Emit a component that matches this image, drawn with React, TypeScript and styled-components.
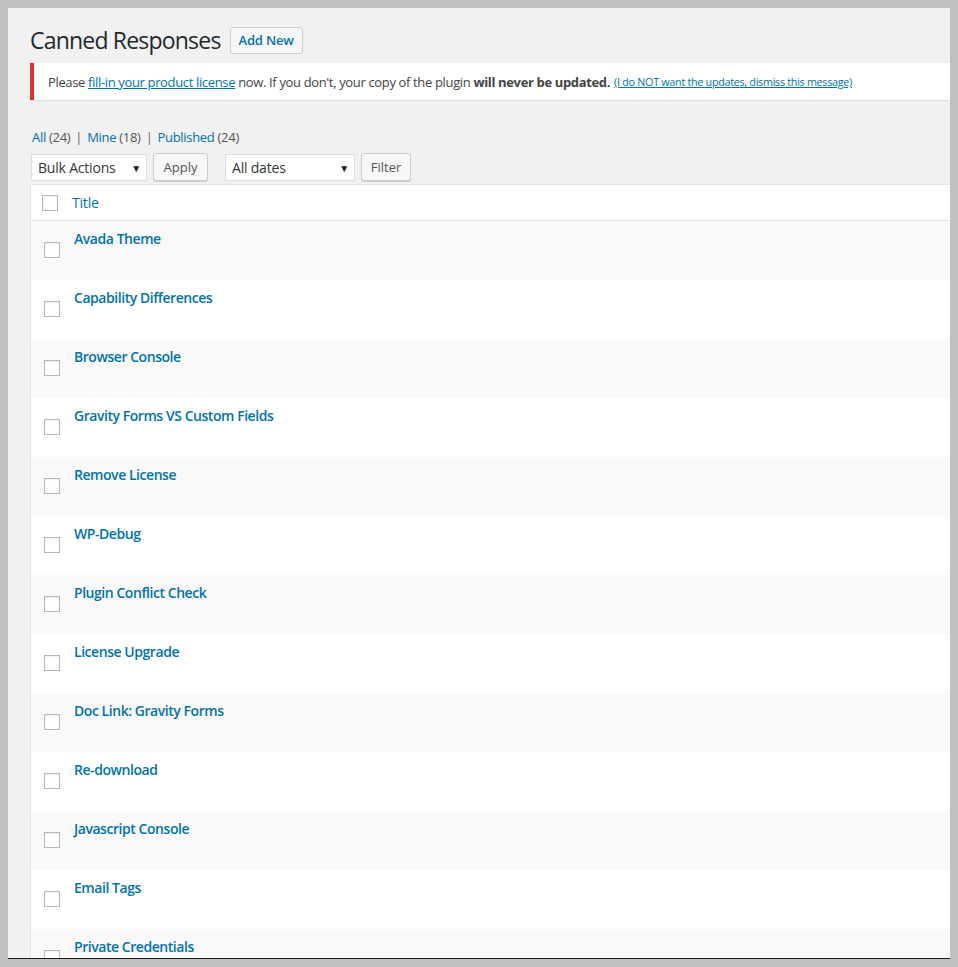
import React from "react";
import styled, { createGlobalStyle } from "styled-components";

const Global = createGlobalStyle`
  html, body { margin: 0; padding: 0; }
  body {
    background: #c0c0c0;
    font-family: "Open Sans", "Noto Sans", sans-serif;
    color: #444;
  }
`;

const Frame = styled.div`
  padding: 8px 8px 0 8px;
  width: 958px;
  height: 967px;
  box-sizing: border-box;
`;

const Page = styled.div`
  width: 942px;
  height: 951px;
  background: #f1f1f1;
  overflow: hidden;
  border-bottom: 1px solid #1a1a22;
  box-sizing: border-box;
  padding: 0 0 0 22px;
`;

const HeadRow = styled.div`
  display: flex;
  align-items: center;
  gap: 9px;
  padding-top: 19px;
  height: 26px;
`;

const Title = styled.h1`
  margin: 0;
  font-size: 23px;
  font-weight: 400;
  color: #23282d;
  line-height: 29px;
  letter-spacing: -0.8px;
`;

const Button = styled.button<{ $blue?: boolean; $w: number }>`
  box-sizing: border-box;
  width: ${(p) => p.$w}px;
  height: ${(p) => (p.$blue ? 27 : 28)}px;
  padding: 0;
  border: 1px solid #ccc;
  border-radius: 3px;
  background: #f7f7f7;
  box-shadow: ${(p) => (p.$blue ? "none" : "0 1px 0 #ccc")};
  color: ${(p) => (p.$blue ? "#0073aa" : "#555")};
  font-family: inherit;
  font-size: 13px;
  font-weight: ${(p) => (p.$blue ? 600 : 400)};
  letter-spacing: ${(p) => (p.$blue ? "-0.2px" : "0")};
  line-height: 1;
  cursor: pointer;
`;

const Notice = styled.div`
  margin-top: 10px;
  height: 37px;
  box-sizing: border-box;
  background: #fff;
  border-left: 4px solid #dc3232;
  box-shadow: 0 1px 1px rgba(0, 0, 0, 0.08);
  display: flex;
  align-items: center;
  padding-left: 14px;
  font-size: 13px;
  color: #444;
  white-space: nowrap;
  letter-spacing: -0.35px;
`;

const Link = styled.a`
  color: #0073aa;
  text-decoration: underline;
`;

const SmallLink = styled.a`
  color: #0073aa;
  text-decoration: underline;
  font-size: 10.8px;
  letter-spacing: -0.3px;
  margin-left: 4px;
`;

const Subsub = styled.div`
  margin-top: 28px;
  padding-left: 2px;
  font-size: 13px;
  line-height: 18px;
  color: #666;
  display: flex;
  gap: 5px;
  letter-spacing: -0.3px;
`;

const SubLink = styled.a`
  color: #0073aa;
  text-decoration: none;
`;

const Count = styled.span`
  color: #555;
`;

const Sep = styled.span`
  color: #666;
`;

const Tablenav = styled.div`
  margin-top: 7px;
  display: flex;
  align-items: flex-start;
  height: 31px;
  padding-left: 1px;
`;

const Select = styled.div<{ $w: number; $gapAfter: number }>`
  box-sizing: border-box;
  width: ${(p) => p.$w}px;
  height: 27px;
  margin-top: 1px;
  margin-right: ${(p) => p.$gapAfter}px;
  background: #fff;
  border: 1px solid #ddd;
  display: flex;
  align-items: center;
  justify-content: space-between;
  padding: 0 5px 0 6px;
  font-size: 14px;
  letter-spacing: -0.2px;
  color: #32373c;
`;

const Arrow = styled.span`
  font-size: 10px;
  color: #222;
`;

const Table = styled.div`
  margin-top: 0;
  background: #fff;
  border: 1px solid #e5e5e5;
  border-right: none;
`;

const HeadCells = styled.div`
  height: 35px;
  display: flex;
  align-items: center;
  border-bottom: 1px solid #e1e1e1;
  padding-left: 11px;
`;

const Check = styled.span`
  display: inline-block;
  box-sizing: border-box;
  width: 16px;
  height: 16px;
  border: 1px solid #b4b9be;
  background: #fff;
  box-shadow: inset 0 1px 2px rgba(0, 0, 0, 0.07);
  flex: none;
`;

const HeadTitle = styled.span`
  margin-left: 14px;
  font-size: 14px;
  color: #0073aa;
  letter-spacing: -0.2px;
`;

const Row = styled.div<{ $alt: boolean }>`
  height: 59px;
  box-sizing: border-box;
  background: ${(p) => (p.$alt ? "#f9f9f9" : "#fff")};
  display: flex;
  align-items: flex-start;
  padding-left: 13px;
`;

const RowCheck = styled.div`
  padding-top: 20px;
`;

const RowTitle = styled.a`
  margin-left: 14px;
  margin-top: 8px;
  font-size: 14px;
  font-weight: 600;
  line-height: 19px;
  color: #0073aa;
  text-decoration: none;
  letter-spacing: -0.45px;
`;

const titles = [
  "Avada Theme",
  "Capability Differences",
  "Browser Console",
  "Gravity Forms VS Custom Fields",
  "Remove License",
  "WP-Debug",
  "Plugin Conflict Check",
  "License Upgrade",
  "Doc Link: Gravity Forms",
  "Re-download",
  "Javascript Console",
  "Email Tags",
  "Private Credentials",
];

export default function App() {
  return (
    <>
      <Global />
      <Frame>
        <Page>
          <HeadRow>
            <Title>Canned Responses</Title>
            <Button $blue $w={73}>Add New</Button>
          </HeadRow>
          <Notice>
            Please&nbsp;<Link href="#">fill-in your product license</Link>&nbsp;now. If you don't, your copy of the plugin&nbsp;<b>will never be updated.</b>
            <SmallLink href="#">(I do NOT want the updates, dismiss this message)</SmallLink>
          </Notice>
          <Subsub>
            <SubLink href="#">All <Count>(24)</Count></SubLink>
            <Sep>|</Sep>
            <SubLink href="#">Mine <Count>(18)</Count></SubLink>
            <Sep>|</Sep>
            <SubLink href="#">Published <Count>(24)</Count></SubLink>
          </Subsub>
          <Tablenav>
            <Select $w={116} $gapAfter={6}>Bulk Actions<Arrow>▼</Arrow></Select>
            <Button $w={55}>Apply</Button>
            <Select $w={130} $gapAfter={6} style={{ marginLeft: 17 }}>All dates<Arrow>▼</Arrow></Select>
            <Button $w={50}>Filter</Button>
          </Tablenav>
          <Table>
            <HeadCells>
              <Check />
              <HeadTitle>Title</HeadTitle>
            </HeadCells>
            {titles.map((t, i) => (
              <Row key={t} $alt={i % 2 === 0}>
                <RowCheck><Check /></RowCheck>
                <RowTitle href="#">{t}</RowTitle>
              </Row>
            ))}
          </Table>
        </Page>
      </Frame>
    </>
  );
}
